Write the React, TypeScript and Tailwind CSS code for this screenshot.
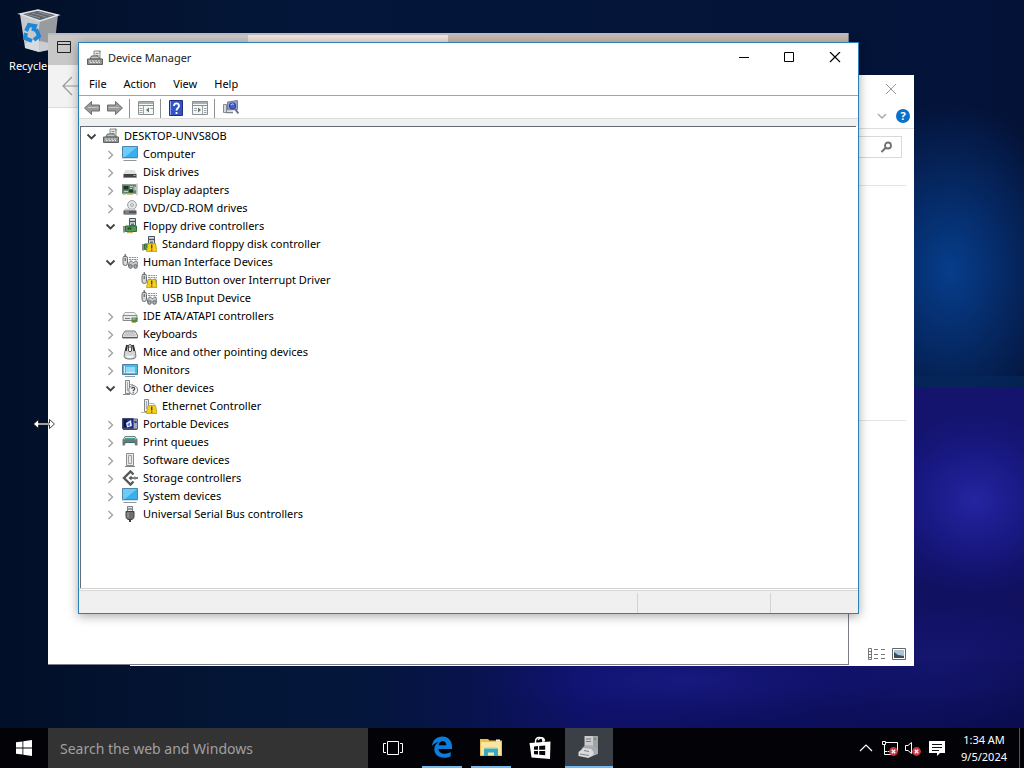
import React, { useState } from 'react';

type IconName =
  | 'root' | 'computer' | 'disk' | 'display' | 'dvd' | 'floppy' | 'hid' | 'ide' | 'keyboard'
  | 'mouse' | 'monitor' | 'other' | 'ethernet' | 'portable' | 'printer' | 'software' | 'storage' | 'usb';

interface DeviceNode {
  label: string;
  icon: IconName;
  warning?: boolean;
  open?: boolean;
  children?: DeviceNode[];
}

const devices: DeviceNode[] = [
  { label: 'Computer', icon: 'computer', children: [] },
  { label: 'Disk drives', icon: 'disk', children: [] },
  { label: 'Display adapters', icon: 'display', children: [] },
  { label: 'DVD/CD-ROM drives', icon: 'dvd', children: [] },
  {
    label: 'Floppy drive controllers',
    icon: 'floppy',
    open: true,
    children: [{ label: 'Standard floppy disk controller', icon: 'floppy', warning: true }],
  },
  {
    label: 'Human Interface Devices',
    icon: 'hid',
    open: true,
    children: [
      { label: 'HID Button over Interrupt Driver', icon: 'hid', warning: true },
      { label: 'USB Input Device', icon: 'hid' },
    ],
  },
  { label: 'IDE ATA/ATAPI controllers', icon: 'ide', children: [] },
  { label: 'Keyboards', icon: 'keyboard', children: [] },
  { label: 'Mice and other pointing devices', icon: 'mouse', children: [] },
  { label: 'Monitors', icon: 'monitor', children: [] },
  {
    label: 'Other devices',
    icon: 'other',
    open: true,
    children: [{ label: 'Ethernet Controller', icon: 'ethernet', warning: true }],
  },
  { label: 'Portable Devices', icon: 'portable', children: [] },
  { label: 'Print queues', icon: 'printer', children: [] },
  { label: 'Software devices', icon: 'software', children: [] },
  { label: 'Storage controllers', icon: 'storage', children: [] },
  { label: 'System devices', icon: 'computer', children: [] },
  { label: 'Universal Serial Bus controllers', icon: 'usb', children: [] },
];

const rowIndent = ['pl-[2px]', 'pl-[21px]', 'pl-[40px]'];

const glyphs: Record<IconName, React.ReactNode> = {
  root: (
    <>
      <path d="M7 1h6v8H7z" fill="#e4e6e4" stroke="#8b8f8c" />
      <path d="M8.5 3.5h3M8.5 5.5h3" stroke="#8a8e8a" />
      <path d="M12 1.5h1.5" stroke="#5aa04a" strokeWidth="1.4" />
      <path d="M3 9l1.500-3h6l3 3z" fill="#c5c7c5" stroke="#5e6260" />
      <path d="M.5 9h15v5.500H.5z" fill="#8e9290" stroke="#5e6260" />
      <path d="M2 11h12M3 12.500h10" stroke="#e0e2e1" strokeDasharray="2 1" />
    </>
  ),
  computer: (
    <>
      <path d="M.5 .5h15v11H.5z" fill="#38b0ee" stroke="#4f86a8" />
      <path d="M1 1h14L3 11H1z" fill="#6fcaf7" />
      <path d="M0 12.500h16" stroke="#d6dde2" />
      <path d="M1.500 14.500h13" stroke="#8d979d" />
    </>
  ),
  disk: (
    <>
      <path d="M3.500 6h9l2 4h-13z" fill="#dfe0e0" />
      <path d="M1.500 10h13v4h-13z" fill="#3f4244" />
      <path d="M2 13.500h12" stroke="#8b8f92" />
      <path d="M11.500 11.500h2" stroke="#a8c6a0" />
    </>
  ),
  display: (
    <>
      <path d="M0 2.500h14v9H0z" fill="#5f8570" stroke="#7a8c82" strokeWidth=".6" />
      <path d="M1.500 4h5v3.500h-5z" fill="#24362c" />
      <path d="M8 4.500h3M8 6.500h2M12 5h1.500v3H12zM2 9.500h4" stroke="#b9d2c2" />
      <path d="M7 7.500h4v3H7z" fill="#1e3d2c" />
      <path d="M15 1.500v12" stroke="#a8aaab" />
      <path d="M1 12h3M5 12h6" stroke="#c6b057" strokeWidth="1.400" />
    </>
  ),
  dvd: (
    <>
      <circle cx="10" cy="5" r="4.400" fill="#e6e7e8" stroke="#9a9c9e" />
      <circle cx="10" cy="5" r="1.400" fill="#fff" stroke="#8a8d90" strokeWidth=".8" />
      <path d="M3 8.500h9.500l2 2.500h-13z" fill="#c8cacc" />
      <path d="M1.500 10.500h13v4h-13z" fill="#55585b" />
      <path d="M2 14h12" stroke="#8f9294" />
      <path d="M3 12h4" stroke="#a9acae" />
    </>
  ),
  floppy: (
    <>
      <path d="M7.500 .5h6v7h-6z" fill="#cfe0e8" stroke="#4b5356" />
      <path d="M8 3.500h5" stroke="#4d5456" strokeWidth="1.400" />
      <path d="M9 5.500h3v2H9z" fill="#5f7078" />
      <path d="M3.500 8h11v5.500h-11z" fill="#4f9a5a" stroke="#2f6d3c" />
      <path d="M5.500 9.500h4v2h-4z" fill="#1f5230" />
      <path d="M1 8h2v6.500H1z" fill="#8d9092" />
      <path d="M5 14.500h6" stroke="#c9b457" strokeWidth="1.400" />
    </>
  ),
  hid: (
    <>
      <rect x="1" y="2" width="4.500" height="9.500" rx="2.200" fill="#d5d7d8" stroke="#6b6f72" />
      <path d="M3.200 0v3M3.200 4v3" stroke="#4a4e51" />
      <path d="M7 3.500h9M7 5.500h9" stroke="#8d9295" strokeDasharray="2 .6" />
      <path d="M6.500 12c0-3 1-5 2.500-5s1.500 1.500 2.500 1.500S12.500 7 14 7s2 2 2 5" fill="#c3c7c9" stroke="#6b7073" />
      <circle cx="8.500" cy="12.500" r="1.800" fill="#a9afb3" stroke="#5c6164" />
      <circle cx="13.500" cy="12.500" r="1.800" fill="#a9afb3" stroke="#5c6164" />
    </>
  ),
  ide: (
    <>
      <path d="M3 4.500h9.500l2.500 3H1z" fill="#f0f1f1" stroke="#a8abad" />
      <path d="M1 7.500h14v5H1z" fill="#e6e8e8" stroke="#888c8e" />
      <path d="M3 10.500h5" stroke="#777b7d" />
      <path d="M9.500 9.500h6v4.500h-6z" fill="#4d8a52" />
      <path d="M10.500 11h3" stroke="#a8d6a4" />
      <path d="M10 14.500h4" stroke="#c9b457" />
    </>
  ),
  keyboard: (
    <>
      <path d="M3 5h10l2.500 4v3H.5V9z" fill="#dcdddd" stroke="#77797b" />
      <path d="M3.500 7h9M2.500 9h11" stroke="#a2a5a7" strokeDasharray="1.500 .5" />
      <path d="M1 11.500h14" stroke="#55585a" />
    </>
  ),
  mouse: (
    <>
      <path d="M5 1.500C3.500 5 2 9 2.200 12.500c.3 2 2.500 2.500 5.800 2.500s5.500-.5 5.800-2.500C14 9 12.500 5 11 1.500z" fill="#d4d5d6" stroke="#6a6d70" />
      <path d="M5 1L3.800 7M11 1l1.200 6" stroke="#2f3234" strokeWidth="1.800" />
      <rect x="6.400" y=".6" width="3.200" height="7" rx="1.500" fill="#fff" stroke="#3a3d40" />
      <circle cx="8" cy="3" r=".8" fill="#3a3d40" />
      <path d="M5 12c2 1.500 4 1.500 6 0" stroke="#f5f5f5" strokeWidth="2" fill="none" />
    </>
  ),
  monitor: (
    <>
      <path d="M.5 2.500h15v10H.5z" fill="#4ab9ee" stroke="#4f7f9c" />
      <path d="M4 5h9v5H4z" fill="#8fdcf8" />
      <path d="M2.500 4v7M4 10.500h9" stroke="#d2f1fc" />
      <path d="M3 14.500h10" stroke="#89a0ad" />
    </>
  ),
  other: (
    <>
      <path d="M3.500.5h4v13h-4z" fill="#eceded" stroke="#828688" />
      <path d="M5.500 2v9" stroke="#a8abad" />
      <path d="M1 14.500h7" stroke="#8a8e90" />
      <path d="M8 4.500h3v2" stroke="#a8abad" fill="none" />
      <circle cx="11.200" cy="10" r="4.400" fill="#f3f4f6" stroke="#7e8287" />
      <path d="M9.700 8.800c0-2 3-2 3 0 0 1.200-1.500 1.200-1.500 2.500M11.200 12.200v1" stroke="#44484d" strokeWidth="1.200" fill="none" />
    </>
  ),
  ethernet: (
    <>
      <path d="M3.500 1.500h4v12h-4z" fill="#eceded" stroke="#828688" />
      <path d="M5.500 3v8" stroke="#a8abad" />
      <path d="M0 14.500h9" stroke="#c2b98a" />
      <path d="M8 5.500h5v4" fill="none" stroke="#b7babc" />
    </>
  ),
  portable: (
    <>
      <path d="M.5 2.500h11v10H.5z" fill="#1a2a8c" stroke="#414a78" />
      <path d="M2 4h3v7H2z" fill="#0b1550" />
      <path d="M4 7l5-3 1 6-5 1.500z" fill="#dfe5fb" />
      <path d="M5.500 8l2.500-1.500v3l-2 .5z" fill="#5a70cc" />
      <path d="M11.500 3h4v10h-4z" fill="#a8abb2" stroke="#5d6168" />
      <circle cx="13.500" cy="6" r="1.300" fill="#2b3f9e" />
      <path d="M1 13.500h14" stroke="#4b5058" />
    </>
  ),
  printer: (
    <>
      <path d="M3 2.500h10l2 3.500H1z" fill="#d5ece7" stroke="#69807b" />
      <path d="M.5 5.500h15v6H.5z" fill="#6d7978" />
      <path d="M3 5h10" stroke="#2c9b88" strokeWidth="1.800" />
      <path d="M4 8h8l2 6H2z" fill="#fff" />
      <path d="M3 8.500h10" stroke="#3d6f66" />
    </>
  ),
  software: (
    <>
      <path d="M4.500 1.500h7v12h-7z" fill="#e9eaea" stroke="#8a8d8f" />
      <path d="M6.500 3.500h3v8h-3z" fill="#d0d2d3" stroke="#9fa2a4" />
      <path d="M8 4v7" stroke="#fff" />
      <path d="M3 14.500h10" stroke="#7f8284" />
    </>
  ),
  storage: (
    <>
      <path d="M11.500 4.500L8.500 1.500 2 8l6.500 6.500 3-3" fill="none" stroke="#56595b" strokeWidth="2.400" />
      <path d="M8 8h8" stroke="#56595b" strokeWidth="1.600" />
      <path d="M6.500 8l3-2.500v5z" fill="#56595b" />
      <circle cx="13" cy="8" r="1.500" fill="#7e8183" />
    </>
  ),
  usb: (
    <>
      <path d="M5.500.5h5v5h-5z" fill="#e4e5e6" stroke="#7b7f82" />
      <path d="M7 2v2M9 2v2" stroke="#4f5356" />
      <path d="M4 5.500h8v5c0 1.500-1 2.500-2 3H6c-1-.5-2-1.500-2-3z" fill="#6b6f72" stroke="#3e4144" />
      <path d="M6 6.500v5" stroke="#a8abae" />
      <path d="M8 13v3" stroke="#3e4144" strokeWidth="2" />
    </>
  ),
};

function DeviceIcon({ name, warning }: { name: IconName; warning?: boolean }) {
  return (
    <svg viewBox="0 0 16 16" className="size-4 shrink-0" fill="none" aria-hidden="true">
      {glyphs[name]}
      {warning && (
        <>
          <path d="M7 7.500h7.500l1.500 8H5.500z" fill="#f5cf1d" stroke="#c39a10" strokeWidth=".8" />
          <path d="M10.700 8.500v4M10.700 13.500v1.300" stroke="#5c4a10" strokeWidth="1.400" />
        </>
      )}
    </svg>
  );
}

function TreeRow({ node, depth }: { node: DeviceNode; depth: number }) {
  const [open, setOpen] = useState(!!node.open);
  return (
    <li>
      <button
        type="button"
        onClick={() => node.children && setOpen(!open)}
        aria-expanded={node.children ? open : undefined}
        className={`flex h-[18px] items-center whitespace-nowrap ${rowIndent[depth]}`}
      >
        <svg viewBox="0 0 16 16" className="mr-1 size-4 shrink-0" fill="none" aria-hidden="true">
          {node.children && (open
            ? <path d="M4.500 6.500l4 4 4-4" stroke="#404040" strokeWidth="1.800" />
            : <path d="M6.500 5l4 4-4 4" stroke="#a2a2a2" strokeWidth="1.400" />)}
        </svg>
        <DeviceIcon name={node.icon} warning={node.warning} />
        <span className="ml-[5px]">{node.label}</span>
      </button>
      {open && node.children && node.children.length > 0 && (
        <ul>
          {node.children.map(child => <TreeRow key={child.label} node={child} depth={depth + 1} />)}
        </ul>
      )}
    </li>
  );
}

function Wallpaper() {
  return (
    <svg viewBox="0 0 1024 768" preserveAspectRatio="none" className="absolute inset-0 size-full" aria-hidden="true">
      <defs>
        <linearGradient id="night" x1="0" y1="0" x2="1" y2="0">
          <stop offset="0" stopColor="#020f28" />
          <stop offset=".3" stopColor="#04173a" />
          <stop offset=".7" stopColor="#031438" />
          <stop offset="1" stopColor="#041238" />
        </linearGradient>
        <radialGradient id="beam">
          <stop offset="0" stopColor="#07459a" />
          <stop offset="1" stopColor="#07459a" stopOpacity="0" />
        </radialGradient>
        <radialGradient id="violet">
          <stop offset="0" stopColor="#2727a8" />
          <stop offset=".5" stopColor="#1b1b8e" stopOpacity=".8" />
          <stop offset="1" stopColor="#14147a" stopOpacity="0" />
        </radialGradient>
        <linearGradient id="floor" x1="0" y1="0" x2="0" y2="1">
          <stop offset="0" stopColor="#14146e" />
          <stop offset=".6" stopColor="#10105e" />
          <stop offset="1" stopColor="#0a0c48" />
        </linearGradient>
        <linearGradient id="glow" x1="0" y1="0" x2="1" y2="0">
          <stop offset="0" stopColor="#0c0f5a" stopOpacity="0" />
          <stop offset=".35" stopColor="#0e1168" />
          <stop offset="1" stopColor="#0b0d50" />
        </linearGradient>
      </defs>
      <rect width="1024" height="768" fill="url(#night)" />
      <ellipse cx="950" cy="270" rx="120" ry="170" fill="url(#beam)" opacity=".85" />
      <path d="M900 388h124v380H900z" fill="url(#floor)" />
      <path d="M350 660h674v108H350z" fill="url(#glow)" />
      <ellipse cx="975" cy="500" rx="110" ry="100" fill="url(#violet)" opacity=".9" />
      <ellipse cx="940" cy="660" rx="180" ry="70" fill="url(#violet)" opacity=".3" />
      <ellipse cx="690" cy="680" rx="220" ry="45" fill="url(#violet)" opacity=".4" />
      <path d="M914 376h110v12H914z" fill="#05265a" opacity=".7" />
    </svg>
  );
}

function RecycleBin() {
  return (
    <button type="button" className="absolute left-0 top-[6px] flex w-[76px] flex-col items-center gap-1 text-[11px] text-white">
      <svg viewBox="0 0 48 48" className="size-12" aria-hidden="true">
        <path d="M6 8l20 7-1 31-14-4z" fill="#c6cacd" />
        <path d="M26 15l18-6-4 34-15 3z" fill="#989ca1" />
        <path d="M6 8l18-4 20 5-18 6z" fill="#5f656b" stroke="#e3e6e8" strokeWidth="1.500" />
        <path d="M12 8l14 4M18 7l14 4M24 6l14 4" stroke="#8b9298" />
        <path d="M11 38l8-5 7 2 14 3-1 5-14 3-14-4z" fill="#dfe2e5" opacity=".7" />
        <path d="M12 25l3-6 6 1-2 5M22 23l3 7-5 4M18 35l-7-3 1-5" fill="none" stroke="#1e86d6" strokeWidth="4" />
      </svg>
      Recycle Bin
    </button>
  );
}

function BrowserWindow() {
  return (
    <section aria-label="Browser" className="absolute left-[48px] top-[33px] flex h-[632px] w-[801px] flex-col border-b border-r border-[#7d7d88] bg-white">
      <div className="flex h-8 shrink-0 items-start border-t-2 border-[#bcbcbc] bg-[#c8c8c8]">
        <div className="flex w-[200px] items-center pl-2 pt-1">
          <button type="button" aria-label="Restore tabs">
            <svg viewBox="0 0 16 16" className="size-4" fill="none" stroke="#222" aria-hidden="true">
              <path d="M1.500 2.500h13v11h-13zM1.500 5.500h13" />
            </svg>
          </button>
        </div>
        <div className="h-full w-[200px] bg-[#f1e2da]" />
        <div className="h-full flex-1 bg-[#c9b8ac]" />
      </div>
      <div className="flex h-[43px] shrink-0 items-center border-b border-[#dcdcdc] bg-[#f2f2f2] pl-3">
        <button type="button" aria-label="Back">
          <svg viewBox="0 0 20 20" className="size-5" fill="none" stroke="#9a9a9a" aria-hidden="true">
            <path d="M20 10H3M12 1l-9 9 9 9" strokeWidth="1.200" />
          </svg>
        </button>
      </div>
    </section>
  );
}

function ExplorerWindow() {
  return (
    <section aria-label="File Explorer" className="absolute left-[130px] top-[75px] flex h-[591px] w-[784px] flex-col items-end bg-white">
      <div className="flex h-[54px] w-full flex-col items-end border-b border-[#dedede]">
        <button type="button" aria-label="Close" className="mr-[15px] mt-[6px]">
          <svg viewBox="0 0 16 16" className="size-4" stroke="#999" aria-hidden="true"><path d="M3 3l10 10M13 3L3 13" /></svg>
        </button>
        <div className="mr-1 mt-3 flex items-center gap-2">
          <button type="button" aria-label="Expand ribbon">
            <svg viewBox="0 0 12 12" className="size-3" fill="none" stroke="#aaa" strokeWidth="1.500" aria-hidden="true"><path d="M2 4l4 4 4-4" /></svg>
          </button>
          <button type="button" aria-label="Help" className="size-[14px] rounded-full bg-[#0a70c8] text-center text-[11px] font-bold leading-[14px] text-white">?</button>
        </div>
      </div>
      <div className="mr-3 mt-[7px] flex h-[22px] w-[180px] items-center border border-[#d9d9d9] pr-2">
        <input aria-label="Search folder" className="min-w-0 flex-1 outline-none" />
        <svg viewBox="0 0 14 14" className="size-[14px]" fill="none" stroke="#707070" aria-hidden="true">
          <circle cx="9" cy="5.500" r="3" strokeWidth="1.800" />
          <path d="M6.500 8l-4 4" strokeWidth="2" />
        </svg>
      </div>
      <div className="mr-2 mt-[27px] h-px w-[200px] bg-[#e4e4e4]" />
      <div className="mr-2 mt-[234px] h-px w-[200px] bg-[#e4e4e4]" />
      <div className="mb-[5px] mr-2 mt-auto flex items-center gap-[6px]">
        <button type="button" aria-label="Details view">
          <svg viewBox="0 0 18 14" className="h-[14px] w-[18px]" fill="none" stroke="#777" aria-hidden="true">
            <path d="M.5 1.500h3v11h-3zM.5 4.500h3M.5 7.500h3M.5 10.500h3" />
            <path d="M6 2.500h4M13 2.500h4M6 7.500h4M13 7.500h4M6 11.500h4M13 11.500h4" />
          </svg>
        </button>
        <button type="button" aria-label="Thumbnail view">
          <svg viewBox="0 0 14 12" className="h-3 w-[14px]" aria-hidden="true">
            <path d="M.5 .5h13v11H.5z" fill="#fff" stroke="#666" />
            <path d="M2 2h10v8H2z" fill="#a8c4d6" />
            <path d="M2 4l4 3 6 1v2H2z" fill="#3c4c58" />
          </svg>
        </button>
      </div>
    </section>
  );
}

function ToolArrow({ flip }: { flip?: boolean }) {
  return (
    <svg viewBox="0 0 16 16" className={flip ? 'size-4 -scale-x-100' : 'size-4'} aria-hidden="true">
      <path d="M.5 8l7-6.500V5h8v6h-8v3.500z" fill="#9a9a9a" stroke="#6c6c6c" />
      <path d="M4 7.500h10" stroke="#c5c5c5" />
    </svg>
  );
}

function PanelIcon({ flip }: { flip?: boolean }) {
  return (
    <svg viewBox="0 0 16 14" className="h-[14px] w-4" fill="none" aria-hidden="true">
      <path d="M.5 .5h15v13H.5z" fill="#f7f7f5" stroke="#8a8f94" />
      <path d="M1 2h14" stroke="#a9afb5" strokeWidth="2" />
      <path d="M1 4.500h14" stroke="#8a8f94" />
      <path d={flip ? 'M10.500 5v8M12 7.500h2.500M12 9.500h2.500M12 11.500h2.500M2 7.500h3M2 9.500h3' : 'M5.500 5v8M1.500 7.500h3M1.500 9.500h3M1.500 11.500h3M12 7.500h3'} stroke="#9da3a9" />
      <path d={flip ? 'M6 6.500v5l3-2.500z' : 'M11 6.500v5L8 9z'} fill="#5c7a62" />
    </svg>
  );
}

function DeviceManager() {
  return (
    <section
      aria-label="Device Manager"
      className="absolute left-[78px] top-[42px] flex h-[572px] w-[781px] flex-col border border-[#2c80b8] bg-white text-[11px] text-black shadow-[0_2px_10px_rgba(0,0,0,0.35)]"
    >
      <header className="flex h-[30px] shrink-0 items-center pl-2">
        <DeviceIcon name="root" />
        <h1 className="ml-[5px] flex-1 text-[#222]">Device Manager</h1>
        <div className="flex">
          <button type="button" aria-label="Minimize" className="flex w-[45px] justify-center">
            <svg viewBox="0 0 12 12" className="size-3" stroke="#000" aria-hidden="true"><path d="M1 5.500h10" /></svg>
          </button>
          <button type="button" aria-label="Maximize" className="flex w-[45px] justify-center">
            <svg viewBox="0 0 12 12" className="size-3" fill="none" stroke="#000" aria-hidden="true"><path d="M1.500 .5h9v9h-9z" /></svg>
          </button>
          <button type="button" aria-label="Close" className="flex w-[47px] justify-center">
            <svg viewBox="0 0 12 12" className="size-3" stroke="#000" aria-hidden="true"><path d="M1 0l10 10M11 0L1 10" strokeWidth="1.200" /></svg>
          </button>
        </div>
      </header>

      <nav className="flex h-[23px] shrink-0 items-center gap-px border-b border-[#a5a5a5] pl-[2px]">
        <button type="button" className="px-2">File</button>
        <button type="button" className="px-2">Action</button>
        <button type="button" className="px-2">View</button>
        <button type="button" className="px-2">Help</button>
      </nav>

      <div className="flex h-[23px] shrink-0 items-center border-b border-[#dcdcdc] pl-[5px] pt-[2px]">
        <button type="button" aria-label="Back"><ToolArrow /></button>
        <button type="button" aria-label="Forward" className="ml-[7px]"><ToolArrow flip /></button>
        <div className="ml-[6px] h-[19px] w-px bg-[#8f8f8f]" />
        <button type="button" aria-label="Show console tree" className="ml-2"><PanelIcon /></button>
        <div className="ml-[6px] h-[19px] w-px bg-[#8f8f8f]" />
        <button type="button" aria-label="Help topics" className="ml-2">
          <svg viewBox="0 0 14 16" className="h-4 w-[14px]" fill="none" aria-hidden="true">
            <path d="M.5 .5h13v15H.5z" fill="#3454c4" stroke="#1d2f80" />
            <path d="M1.500 1v14" stroke="#8fa5ee" />
            <path d="M5 6c0-3.500 5-3.500 5 0 0 2-2.500 2-2.500 4.500M7.500 12v2" stroke="#fff" strokeWidth="1.800" />
          </svg>
        </button>
        <button type="button" aria-label="Show action pane" className="ml-[9px]"><PanelIcon flip /></button>
        <div className="ml-[6px] h-[19px] w-px bg-[#8f8f8f]" />
        <button type="button" aria-label="Scan for hardware changes" className="ml-2">
          <svg viewBox="0 0 16 16" className="size-4" fill="none" aria-hidden="true">
            <path d="M.5 4.500h3v8h-3z" fill="#d5d7da" stroke="#85898e" />
            <path d="M4.500 2l10-1.500v9l-10 .5z" fill="#8f9fd8" stroke="#7a8094" />
            <path d="M3 12.500h7" stroke="#7b7f86" strokeWidth="1.500" />
            <circle cx="9.500" cy="6" r="3.200" fill="#4460c0" stroke="#2c3f96" />
            <path d="M7.800 5c.8-1.300 2-1.300 2.800-.6" stroke="#e4ebff" />
            <path d="M11.500 8.500l4 5" stroke="#6c7280" strokeWidth="2" />
          </svg>
        </button>
      </div>
      <div className="h-[7px] shrink-0 bg-[#f0f0f0]" />

      <div className="ml-px mr-[2px] min-h-0 flex-1 border-l border-t border-[#666c74] bg-white">
        <ul>
          <TreeRow node={{ label: 'DESKTOP-UNVS8OB', icon: 'root', open: true, children: devices }} depth={0} />
        </ul>
      </div>

      <footer className="shrink-0 border-t border-[#d0d0d0] pt-px">
        <div className="flex h-[23px] border-t border-[#d7d7d7] bg-[#f0f0f0] pt-[2px]">
          <div className="flex-1 border-r border-[#d4d4d4]" />
          <div className="w-[133px] border-r border-[#d4d4d4]" />
          <div className="w-[87px]" />
        </div>
      </footer>
    </section>
  );
}

function TaskButton({ label, running, active, children }: { label: string; running?: boolean; active?: boolean; children: React.ReactNode }) {
  return (
    <button
      type="button"
      aria-label={label}
      className={`flex w-12 flex-col items-center ${active ? 'bg-[#3b3f46]' : ''}`}
    >
      <span className="flex flex-1 items-center">{children}</span>
      {running && <span className={`h-[2px] bg-[#76b9ed] ${active ? 'w-full' : 'w-10'}`} />}
    </button>
  );
}

function Taskbar() {
  return (
    <footer className="relative flex h-10 shrink-0 bg-[#030307]">
      <button type="button" aria-label="Start" className="flex w-12 items-center justify-center">
        <svg viewBox="0 0 16 16" className="size-4" fill="#fff" aria-hidden="true">
          <path d="M0 2.300l6.500-.9v6.200H0zM7.300 1.300L16 0v7.600H7.300zM0 8.400h6.500v6.200L0 13.700zM7.300 8.400H16V16l-8.700-1.300z" />
        </svg>
      </button>
      <input
        type="search"
        aria-label="Search the web and Windows"
        placeholder="Search the web and Windows"
        className="w-80 bg-[#333333] px-3 text-[14px] text-white outline-none placeholder:text-[#a0a0a0]"
      />
      <div className="ml-px flex gap-px">
        <TaskButton label="Task View">
          <svg viewBox="0 0 20 16" className="h-4 w-5" fill="none" stroke="#fff" aria-hidden="true">
            <path d="M4.500 1.500h11v13h-11zM3 3.500H.5v9H3M17 3.500h2.500v9H17" />
          </svg>
        </TaskButton>
        <TaskButton label="Microsoft Edge" running>
          <svg viewBox="0 0 22 22" className="size-[22px]" aria-hidden="true">
            <path d="M1 10C1.500 4 6 .5 11.500.5 17.500.5 21 5 21 10.500V13H7.500c.3 3.300 3 4.700 6 4.700 2.400 0 4.500-.6 6.200-1.700v4.300c-2 1-4.200 1.500-6.700 1.500-6 0-9.700-3.700-9.700-8.500 0-3.200 1.600-6 4.700-7.400C5.300 6.500 2.700 7.500 1 10zM7.700 9.200h7.500c0-2.400-1.300-3.900-3.500-3.900-2.300 0-3.700 1.600-4 3.900z" fill="#0d7ddb" />
          </svg>
        </TaskButton>
        <TaskButton label="File Explorer" running>
          <svg viewBox="0 0 22 18" className="h-[18px] w-[22px]" aria-hidden="true">
            <path d="M0 1h8l1.500 1.500H22V18H0z" fill="#e9bd55" />
            <path d="M1 4h20v13H1z" fill="#fbe59a" />
            <path d="M16 1.500h4v2h-4z" fill="#f8f4e4" />
            <path d="M4 18v-7.500h14V18h-4v-3.500H8V18z" fill="#36a8c8" />
            <path d="M5 10h12" stroke="#8ad4e4" />
          </svg>
        </TaskButton>
        <TaskButton label="Store">
          <svg viewBox="0 0 22 24" className="h-6 w-[22px]" aria-hidden="true">
            <path d="M6.500 7V5.500C6.500 0 14 0 14 5.500V7M9 4c2-3.500 6.500-3 6.500 1.500" fill="none" stroke="#fff" strokeWidth="1.400" />
            <path d="M.5 7L21.500 5.500 21 23 2.500 21.500z" fill="#fff" />
            <path d="M5 10.500l4-.4v3.700H5zM10.200 10l6-.5v4.300h-6zM5 14.900h4v3.700L5 18.200zM10.200 14.900h6v4.300l-6-.5z" fill="#08080c" />
          </svg>
        </TaskButton>
        <TaskButton label="Device Manager" running active>
          <svg viewBox="0 0 24 24" className="size-6" aria-hidden="true">
            <path d="M7.500 1H20v16H7.500z" fill="#c9cbcc" />
            <path d="M16 1h5v17h-5z" fill="#a1a4a6" />
            <path d="M9 4h5M9 6.500h5" stroke="#777b7e" />
            <circle cx="18" cy="4" r="1" fill="#4a9a3e" />
            <path d="M5 13l4-3 8 1 4 4v4l-8 3-9-3z" fill="#a9acae" />
            <path d="M1.500 17l5-4 8 1 2 3v3l-5 3-10-2z" fill="#d9dbdc" />
            <path d="M3 19l9 1.500M7 15.500l5 1" stroke="#7f8386" />
          </svg>
        </TaskButton>
      </div>

      <div className="ml-auto flex items-center">
        <button type="button" aria-label="Show hidden icons">
          <svg viewBox="0 0 14 10" className="h-[10px] w-[14px]" fill="none" stroke="#fff" strokeWidth="1.200" aria-hidden="true"><path d="M1 8l6-6 6 6" /></svg>
        </button>
        <button type="button" aria-label="Network" className="ml-2">
          <svg viewBox="0 0 18 16" className="h-4 w-[18px]" fill="none" stroke="#fff" aria-hidden="true">
            <path d="M4 2.500h12.500v9H7M1.500 1.500h3v3h-3zM3.500 5v9.500h8M3.500 11.500h3" />
            <circle cx="12.500" cy="11.500" r="4.400" fill="#d23340" stroke="none" />
            <path d="M10.800 9.800l3.400 3.400M14.200 9.800l-3.400 3.400" strokeWidth="1.300" />
          </svg>
        </button>
        <button type="button" aria-label="Volume" className="ml-[6px]">
          <svg viewBox="0 0 18 16" className="h-4 w-[18px]" fill="none" stroke="#fff" aria-hidden="true">
            <path d="M.5 5.500H3l3.500-3v11L3 10.500H.5z" />
            <circle cx="11.500" cy="11.500" r="4.400" fill="#d23340" stroke="none" />
            <path d="M9.800 9.800l3.400 3.400M13.200 9.800l-3.400 3.400" strokeWidth="1.300" />
          </svg>
        </button>
        <button type="button" aria-label="Notifications" className="ml-[6px]">
          <svg viewBox="0 0 16 16" className="size-4" fill="none" aria-hidden="true">
            <path d="M0 1h16v12h-5l-3 3v-3H0z" fill="#fff" />
            <path d="M3 4.500h10M3 7.500h10M3 10.500h7" stroke="#111" />
          </svg>
        </button>
        <button type="button" className="ml-[15px] w-[48px] whitespace-nowrap text-center text-[11px] leading-[17px] text-white">
          <span className="block">1:34 AM</span>
          <span className="block">9/5/2024</span>
        </button>
        <button type="button" aria-label="Show desktop" className="ml-[11px] h-10 w-[5px] border-l border-[#55555c]" />
      </div>
    </footer>
  );
}

export default function App() {
  return (
    <div className="relative flex h-screen flex-col overflow-hidden bg-[#03102c] font-['Noto_Sans','Open_Sans',sans-serif]">
      <Wallpaper />
      <main className="relative min-h-0 flex-1">
        <RecycleBin />
        <ExplorerWindow />
        <BrowserWindow />
        <DeviceManager />
        <svg viewBox="0 0 22 10" className="absolute left-[33px] top-[419px] h-[10px] w-[22px]" aria-hidden="true">
          <path d="M.5 5l5-4.500V4h11V.5l5 4.500-5 4.500V6h-11v3.500z" fill="#fff" stroke="#111" strokeWidth=".8" />
        </svg>
      </main>
      <Taskbar />
    </div>
  );
}
